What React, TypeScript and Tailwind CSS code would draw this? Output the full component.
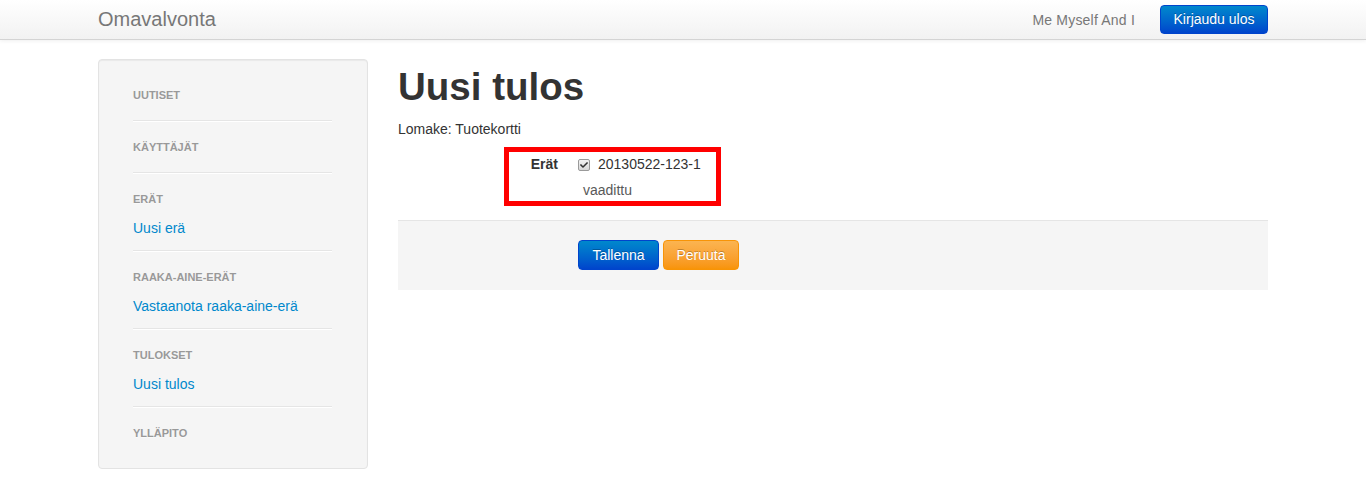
import { FaCheck } from "react-icons/fa";

const sections = [
    { header: "Uutiset" },
    { header: "Käyttäjät" },
    { header: "Erät", link: "Uusi erä" },
    { header: "Raaka-aine-erät", link: "Vastaanota raaka-aine-erä" },
    { header: "Tulokset", link: "Uusi tulos" },
    { header: "Ylläpito" },
];

function Sidebar() {
    return (
        <div className="w-[270px] shrink-0 bg-[#f5f5f5] border border-[#e3e3e3] rounded-[4px] shadow-[inset_0_1px_1px_rgba(0,0,0,0.05)] pl-[34px] pr-[35px] pt-[25px] pb-[25px]">
            {sections.map((s, i) => (
                <div key={s.header}>
                    {i > 0 && <div className="h-px bg-[#e5e5e5] border-b border-white box-content mb-[15px]" />}
                    <div className={i < sections.length - 1 ? (s.link ? "pb-[12px]" : "pb-[15px]") : ""}>
                        <div className="h-5 leading-5 text-[11px] font-bold uppercase text-[#999] [text-shadow:0_1px_0_rgba(255,255,255,0.5)]">{s.header}</div>
                        {s.link && <a href="#" className="block mt-[9px] h-5 leading-5 text-[14px] text-[#0088cc]">{s.link}</a>}
                    </div>
                </div>
            ))}
        </div>
    );
}

export default function App() {
    return (
        <div className="min-h-[477px] bg-white text-[#333] text-[14px] font-['Liberation_Sans',Arial,sans-serif]">
            <header className="h-[40px] border-b border-[#d4d4d4] bg-gradient-to-b from-white to-[#f2f2f2] shadow-[0_1px_4px_rgba(0,0,0,0.065)]">
                <div className="w-[1170px] mx-auto h-full flex items-center">
                    <span className="text-[20px] text-[#777] leading-5 mb-[2px]">Omavalvonta</span>
                    <div className="ml-auto flex items-center">
                        <a href="#" className="text-[#777] leading-5 mr-[25px] tracking-[0.2px]">Me Myself And I</a>
                        <button className="h-[29px] w-[108px] rounded-[4px] border border-[#0044cc] bg-gradient-to-b from-[#0088cc] to-[#0044cc] text-white leading-5 [text-shadow:0_-1px_0_rgba(0,0,0,0.25)] mb-[1px]">Kirjaudu ulos</button>
                    </div>
                </div>
            </header>

            <div className="w-[1170px] mx-auto mt-[19px] flex gap-[30px] items-start">
                <Sidebar />
                <main className="flex-1">
                    <h1 className="mt-[8px] mb-[12px] text-[38.5px] leading-10 font-bold text-[#333]">Uusi tulos</h1>
                    <p className="leading-5 mb-[10px]">Lomake: Tuotekortti</p>

                    <div className="relative flex">
                        <div className="absolute left-[106px] -top-[2px] w-[217px] h-[59px] border-[5px] border-[#ff0000]" />
                        <label className="w-[160px] pt-[5px] leading-5 text-right font-bold">Erät</label>
                        <div className="ml-[20px]">
                            <div className="pt-[5px] flex items-center h-[25px]">
                                <span className="w-[12px] h-[12px] rounded-[2px] border border-[#9a9a9a] bg-gradient-to-b from-[#f2f2f2] to-[#d8d8d8] flex items-center justify-center mr-[8px] mt-[1px]">
                                    <FaCheck className="w-[8px] h-[8px] text-[#333]" />
                                </span>
                                <span className="leading-5">20130522-123-1</span>
                            </div>
                            <div className="mt-[6px] leading-5 text-[#595959] pl-[5px]">vaadittu</div>
                        </div>
                    </div>

                    <div className="mt-[20px] bg-[#f5f5f5] border-t border-[#e5e5e5] pt-[19px] pb-[20px] pl-[180px] flex gap-[4px]">
                        <button className="h-[30px] w-[81px] rounded-[4px] border border-[#0044cc] bg-gradient-to-b from-[#0088cc] to-[#0044cc] text-white leading-5 [text-shadow:0_-1px_0_rgba(0,0,0,0.25)]">Tallenna</button>
                        <button className="h-[30px] w-[76px] rounded-[4px] border border-[#f89406] bg-gradient-to-b from-[#fbb450] to-[#f89406] text-white leading-5 [text-shadow:0_-1px_0_rgba(0,0,0,0.25)]">Peruuta</button>
                    </div>
                </main>
            </div>
        </div>
    );
}
